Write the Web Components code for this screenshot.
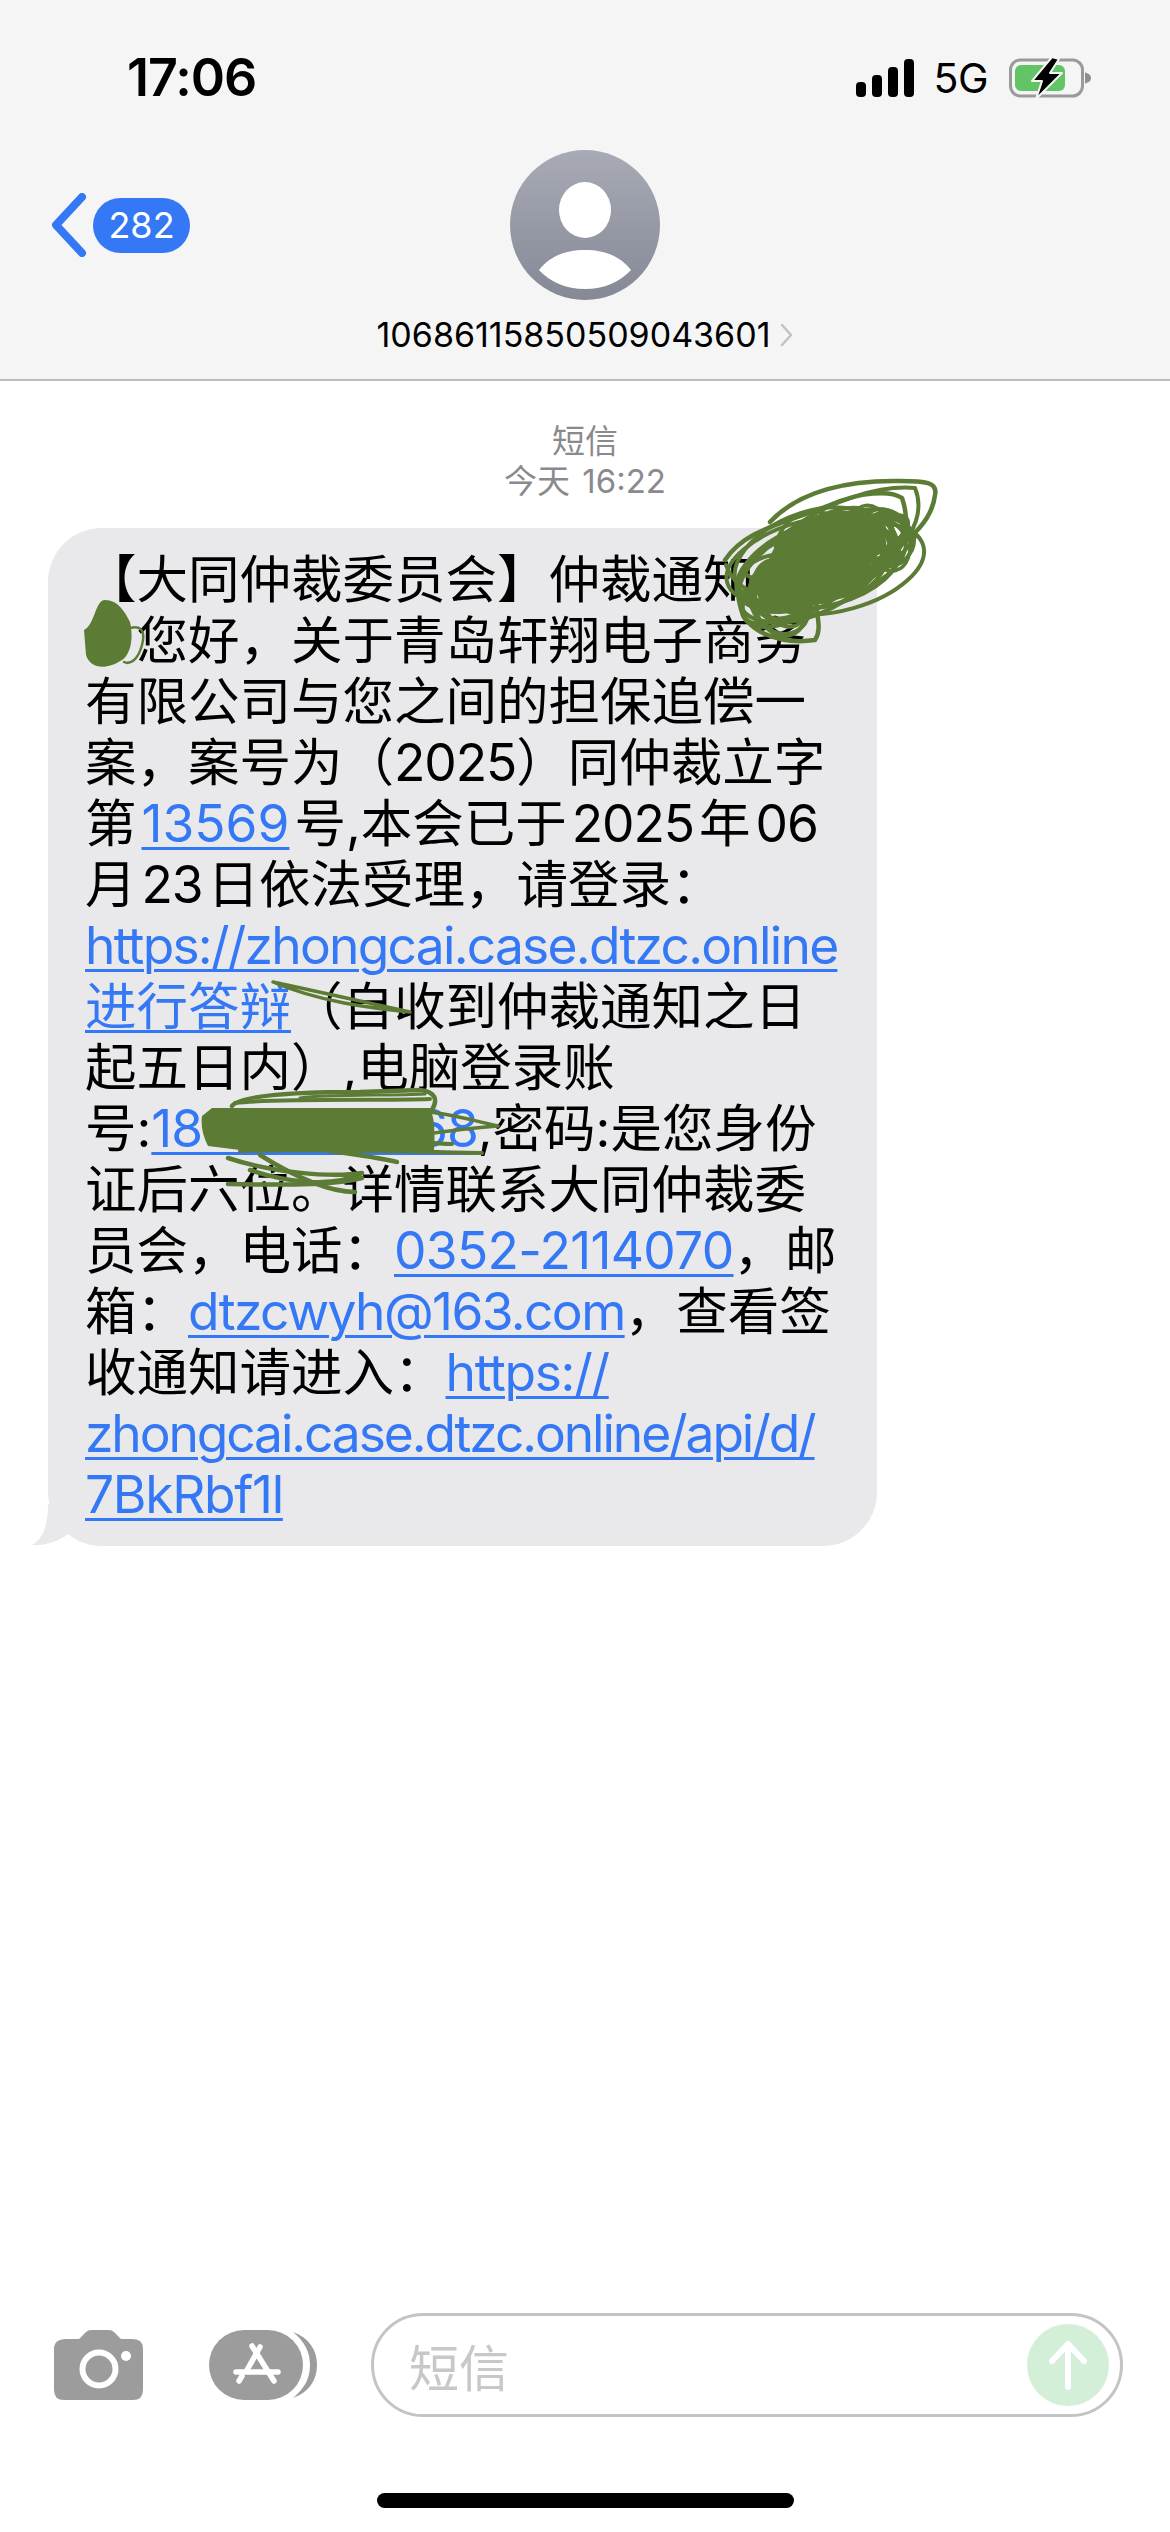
<!DOCTYPE html>
<html lang="zh-CN">
<head>
<meta charset="utf-8">
<title>短信</title>
<style>
  html, body { margin: 0; padding: 0; background: #fff; }
  body {
    width: 1170px;
    height: 2532px;
    position: relative;
    overflow: hidden;
    display: flex;
    flex-direction: column;
    font-family: Inter, "Noto Sans CJK SC", sans-serif;
  }
</style>
</head>
<body>
<chat-header number="10686115850509043601" badge="282"></chat-header>
<msg-thread label="短信" time="今天 16:22">
  <sms-bubble>【大同仲裁委员会】仲裁通知<br><ink-gap></ink-gap>您好，关于青岛轩翔电子商务<br>有限公司与您之间的担保追偿一<br>案，案号为（<sms-num flush>2025</sms-num>）同仲裁立字<br>第<sms-link style="letter-spacing:0">13569</sms-link>号,本会已于<sms-num>2025</sms-num>年<sms-num>06</sms-num><br>月<sms-num>23</sms-num>日依法受理，请登录：<br><sms-link flush style="letter-spacing:-1.75px">https://zhongcai.case.dtzc.online</sms-link><br><sms-link flush cjk>进行答辩</sms-link>（自收到仲裁通知之日<br>起五日内）,电脑登录账<br>号:<sms-link flush>18&nbsp;&nbsp;&nbsp;&nbsp;&nbsp;&nbsp;&nbsp;&nbsp;&nbsp;&nbsp;&nbsp;&nbsp;&nbsp;&nbsp;&nbsp;&nbsp;68</sms-link>,密码:是您身份<br>证后六位。详情联系大同仲裁委<br>员会，电话：<sms-link flush style="letter-spacing:-0.7px">0352-2114070</sms-link>，邮<br>箱：<sms-link flush style="letter-spacing:-1.6px">dtzcwyh@163.com</sms-link>，查看签<br>收通知请进入：<sms-link flush style="letter-spacing:-1.3px">https://</sms-link><br><sms-link flush style="letter-spacing:-2.1px">zhongcai.case.dtzc.online/api/d/</sms-link><br><sms-link flush style="letter-spacing:-1.3px">7BkRbf1l</sms-link></sms-bubble>
</msg-thread>
<compose-bar placeholder="短信"></compose-bar>
<home-bar></home-bar>
<ink-layer></ink-layer>

<script>
// header: status row + avatar + number
class ChatHeader extends HTMLElement {
  constructor() {
    super();
    this.attachShadow({ mode: 'open' });
  }

  connectedCallback() {
    const number = this.getAttribute('number');
    const badge = this.getAttribute('badge');
    this.shadowRoot.innerHTML = `
      <style>
        :host {
          display: block;
          flex: none;
          box-sizing: border-box;
          height: 381px;
          background: #f5f5f5;
          border-bottom: 2px solid #bdbdbd;
          font-family: Inter, "Noto Sans CJK SC", sans-serif;
          color: #000;
        }
        .status {
          display: flex;
          align-items: center;
          justify-content: space-between;
          height: 40px;
          padding: 58px 79px 0 127px;
        }
        .clock { font-size: 52px; font-weight: 600; letter-spacing: -1px; line-height: 40px; }
        .icons { display: flex; align-items: center; }
        .net { font-size: 41px; line-height: 40px; margin: 0 21px 0 19px; letter-spacing: -.5px; }
        svg { display: block; }
        .nav { display: grid; grid-template-columns: 1fr auto 1fr; margin-top: 52px; }
        .back { display: flex; align-items: center; gap: 6px; padding-left: 51px; height: 150px; }
        .badge {
          display: flex;
          align-items: center;
          justify-content: center;
          width: 97px;
          height: 55px;
          border-radius: 28px;
          background: #3478f6;
          color: #fff;
          font-size: 36px;
        }
        .number {
          display: flex;
          justify-content: center;
          align-items: center;
          gap: 10px;
          margin-top: 15px;
          font-size: 34px;
          line-height: 40px;
        }
      </style>
      <div class="status">
        <span class="clock">17:06</span>
        <span class="icons">
          <svg width="58" height="38" viewBox="0 0 58 38" fill="#000">
            <rect x="0" y="23" width="10" height="15" rx="4"/>
            <rect x="16" y="16" width="10" height="22" rx="4"/>
            <rect x="32" y="8" width="10" height="30" rx="4"/>
            <rect x="48" y="0" width="10" height="38" rx="4"/>
          </svg>
          <span class="net">5G</span>
          <svg width="82" height="42" viewBox="0 0 82 42">
            <rect x="1.5" y="3" width="72" height="36" rx="10" fill="none" stroke="#9a9a9a" stroke-width="3"/>
            <path d="M76 15.5c3 .5 6 2.5 6 5.5s-3 5-6 5.5z" fill="#8f8f8f"/>
            <rect x="6" y="8" width="50" height="26" rx="6" fill="#63c466"/>
            <path d="M43 0 L23 24 H33 L27 42 L53 16 H41 L50 2 Z" fill="#000" stroke="#f5f5f5" stroke-width="2" stroke-linejoin="round"/>
          </svg>
        </span>
      </div>
      <div class="nav">
        <div class="back">
          <svg width="36" height="64" viewBox="0 0 36 64" fill="none">
            <path d="M31 4 L5 32 L31 60" stroke="#3478f6" stroke-width="8" stroke-linecap="round" stroke-linejoin="round"/>
          </svg>
          <span class="badge">${badge}</span>
        </div>
        <svg width="150" height="150" viewBox="0 0 150 150">
          <defs>
            <linearGradient id="av" x1="0" y1="0" x2="0" y2="1">
              <stop offset="0" stop-color="#a8abb6"/>
              <stop offset="1" stop-color="#858995"/>
            </linearGradient>
          </defs>
          <circle cx="75" cy="75" r="75" fill="url(#av)"/>
          <ellipse cx="75" cy="60" rx="26" ry="28" fill="#fff"/>
          <path d="M29 120 C40 106 56 100 75 100 C94 100 110 106 121 120 C110 132 94 139 75 139 C56 139 40 132 29 120 Z" fill="#fff"/>
        </svg>
        <span></span>
      </div>
      <div class="number">
        <span>${number}</span>
        <svg width="13" height="24" viewBox="0 0 13 24" fill="none">
          <path d="M2 2 L11 12 L2 22" stroke="#c2c2c2" stroke-width="2.5" stroke-linecap="round" stroke-linejoin="round"/>
        </svg>
      </div>
    `;
  }
}

// scrolling part of the conversation
class MsgThread extends HTMLElement {
  constructor() {
    super();
    this.attachShadow({ mode: 'open' });
  }

  connectedCallback() {
    this.shadowRoot.innerHTML = `
      <style>
        :host {
          display: block;
          flex: 1;
          padding-top: 40px;
          font-family: Inter, "Noto Sans CJK SC", sans-serif;
        }
        .stamp {
          text-align: center;
          color: #8a8a8e;
          font-size: 33px;
          line-height: 40px;
          word-spacing: 3px;
          margin-bottom: 27px;
        }
      </style>
      <div class="stamp">${this.getAttribute('label')}<br>${this.getAttribute('time')}</div>
      <slot></slot>
    `;
  }
}

class SmsBubble extends HTMLElement {
  constructor() {
    super();
    this.attachShadow({ mode: 'open' });
  }

  connectedCallback() {
    this.shadowRoot.innerHTML = `
      <style>
        :host {
          display: block;
          position: relative;
          box-sizing: border-box;
          width: 829px;
          margin-left: 48px;
          padding: 21px 37px;
          background: #e9e9eb;
          border-radius: 54px;
          color: #000;
          font-family: Inter, "Noto Sans CJK SC", sans-serif;
          font-size: 51.5px;
          line-height: 61px;
          white-space: nowrap;
        }
        svg { position: absolute; left: -16px; bottom: 0; }
      </style>
      <svg width="40" height="42" viewBox="0 0 40 42">
        <path d="M16 0 C16 20 12 34 0 41 C12 42 26 38 36 30 L40 0 Z" fill="#e9e9eb"/>
      </svg><slot></slot>`;
  }
}

// latin runs are set tighter than the CJK around them
// no whitespace around the slot: these hosts are inline
class SmsNum extends HTMLElement {
  constructor() {
    super();
    this.attachShadow({ mode: 'open' });
  }

  connectedCallback() {
    this.shadowRoot.innerHTML = `<style>
        :host { letter-spacing: -1.1px; margin: 0 5px; }
        :host([flush]) { margin: 0; }
      </style><slot></slot>`;
  }
}

class SmsLink extends HTMLElement {
  constructor() {
    super();
    this.attachShadow({ mode: 'open' });
  }

  connectedCallback() {
    this.shadowRoot.innerHTML = `<style>
        :host {
          color: #3478f6;
          letter-spacing: -1.1px;
          margin: 0 5px;
          text-decoration: underline;
          text-decoration-thickness: 3px;
          text-underline-offset: 5px;
        }
        :host([flush]) { margin: 0; }
        :host([cjk]) { letter-spacing: 0; }
      </style><slot></slot>`;
  }
}

// blank room for the name hidden under the scribble
class InkGap extends HTMLElement {
  constructor() {
    super();
    this.attachShadow({ mode: 'open' });
  }

  connectedCallback() {
    this.shadowRoot.innerHTML = `<style>:host { display: inline-block; width: 1em; }</style>`;
  }
}

class ComposeBar extends HTMLElement {
  constructor() {
    super();
    this.attachShadow({ mode: 'open' });
  }

  connectedCallback() {
    this.shadowRoot.innerHTML = `
      <style>
        :host {
          display: flex;
          flex: none;
          align-items: center;
          padding: 0 47px 0 54px;
          font-family: Inter, "Noto Sans CJK SC", sans-serif;
        }
        svg { display: block; flex: none; }
        .cam { margin-right: 66px; }
        .store { margin-right: 54px; }
        .field {
          flex: 1;
          box-sizing: border-box;
          height: 104px;
          display: flex;
          align-items: center;
          justify-content: space-between;
          padding: 0 11px 0 35px;
          border: 3px solid #c4c4c4;
          border-radius: 52px;
          color: #c8c8c8;
          font-size: 50px;
        }
        .send {
          width: 82px;
          height: 82px;
          border-radius: 50%;
          background: #d3efd7;
          display: flex;
          align-items: center;
          justify-content: center;
        }
      </style>
      <svg class="cam" width="89" height="70" viewBox="0 0 89 70">
        <path d="M12 9 H25 L32 2 Q34 0 37 0 H55 Q58 0 60 2 L67 9 H79 Q89 9 89 19 V60 Q89 70 79 70 H10 Q0 70 0 60 V19 Q0 9 12 9 Z" fill="#9c9c9c"/>
        <circle cx="45" cy="39" r="16.5" fill="none" stroke="#fff" stroke-width="6"/>
        <circle cx="72" cy="26" r="5" fill="#fff"/>
      </svg>
      <svg class="store" width="108" height="70" viewBox="0 0 108 70">
        <path d="M84 2 C100 8 108 20 108 35 C108 50 100 62 84 68 C96 58 101 48 101 35 C101 22 96 12 84 2 Z" fill="#9c9c9c"/>
        <rect x="0" y="0" width="94" height="70" rx="35" fill="#9c9c9c"/>
        <g stroke="#fff" stroke-width="5.5" stroke-linecap="round" fill="none">
          <path d="M51 17 L38 40"/>
          <path d="M33 46 L30 51"/>
          <path d="M43 16 L65 51"/>
          <path d="M27 42 H69"/>
        </g>
      </svg>
      <div class="field">
        <span>${this.getAttribute('placeholder')}</span>
        <span class="send">
          <svg width="44" height="50" viewBox="0 0 44 50" fill="none">
            <path d="M22 47 V4 M6 21 L22 4 L38 21" stroke="#fff" stroke-width="6" stroke-linecap="round" stroke-linejoin="round"/>
          </svg>
        </span>
      </div>
    `;
  }
}

class HomeBar extends HTMLElement {
  constructor() {
    super();
    this.attachShadow({ mode: 'open' });
  }

  connectedCallback() {
    this.shadowRoot.innerHTML = `
      <style>
        :host { display: flex; flex: none; justify-content: center; padding: 76px 0 24px; }
        div { width: 417px; height: 15px; border-radius: 8px; background: #000; }
      </style>
      <div></div>
    `;
  }
}

// green pen marks someone drew over the screenshot
class InkLayer extends HTMLElement {
  constructor() {
    super();
    this.attachShadow({ mode: 'open' });
  }

  // small seeded generator so every run draws the same marks
  rng(seed) {
    let s = seed;
    return () => {
      s = (s * 16807) % 2147483647;
      return (s - 1) / 2147483646;
    };
  }

  loops(seed, cx, cy, rx, ry, tilt, count, width) {
    const rand = this.rng(seed);
    let out = '';
    for (let i = 0; i < count; i++) {
      const a = rx * (0.45 + rand() * 0.55);
      const b = ry * (0.45 + rand() * 0.55);
      const x = cx + (rand() - 0.5) * rx * 0.5;
      const y = cy + (rand() - 0.5) * ry * 0.5;
      const r = tilt + (rand() - 0.5) * 20;
      out += `<ellipse cx="${x.toFixed(1)}" cy="${y.toFixed(1)}" rx="${a.toFixed(1)}" ry="${b.toFixed(1)}" transform="rotate(${r.toFixed(1)} ${x.toFixed(1)} ${y.toFixed(1)})" stroke-width="${width}"/>`;
    }
    return out;
  }

  connectedCallback() {
    this.shadowRoot.innerHTML = `
      <style>
        :host { position: absolute; left: 0; top: 0; width: 1170px; height: 2532px; pointer-events: none; }
        svg { display: block; }
      </style>
      <svg width="1170" height="2532" viewBox="0 0 1170 2532" fill="none" stroke="#5c7c36" stroke-linecap="round" stroke-linejoin="round">
        <!-- top right, over the name -->
        <path d="M762 580 L795 545 L840 522 L880 520 L885 545 L860 575 L830 595 L790 608 L765 605 Z" fill="#5c7c36" stroke="none"/>
        ${this.loops(7, 825, 560, 88, 44, -24, 24, 4)}
        ${this.loops(19, 880, 535, 40, 32, -20, 7, 3.5)}
        ${this.loops(31, 785, 592, 42, 40, -20, 9, 4)}
        <path d="M770 522 C800 490 850 480 900 481 C925 481 938 482 935 495 C932 520 915 535 880 562" stroke-width="4.5"/>
        <path d="M725 560 C745 530 780 525 830 505 C860 492 890 490 902 498 C908 515 906 530 905 542" stroke-width="4.5"/>
        <path d="M790 530 C830 500 880 485 915 488 C922 505 918 525 905 540" stroke-width="4"/>
        <path d="M745 590 C738 620 745 627 772 622 C810 625 860 600 885 560" stroke-width="4.5"/>
        <path d="M740 605 C745 632 780 645 815 640 C825 625 810 605 820 590" stroke-width="4.5"/>
        <path d="M726 565 C735 590 760 600 800 595 C850 590 905 560 916 535" stroke-width="4"/>
        <!-- left, over the surname -->
        <path d="M84 630 C95 625 95 600 105 600 C118 600 125 612 130 622 C134 640 130 655 122 660 C105 671 90 668 86 655 Z" fill="#5c7c36" stroke="none"/>
        <path d="M130 628 C140 625 146 630 142 645 C138 660 130 665 124 662" stroke-width="2.5"/>
        <!-- account number -->
        <path d="M212 1108 H430 Q436 1120 434 1150 H240 L208 1146 Q200 1130 202 1116 Z" fill="#5c7c36" stroke="none"/>
        <path d="M232 1106 C240 1095 300 1092 360 1092 L420 1090 C436 1092 438 1100 432 1110" stroke-width="4.5"/>
        <path d="M235 1103 C280 1098 380 1101 430 1099" stroke-width="4"/>
        <path d="M300 1098 C330 1094 390 1096 425 1094" stroke-width="3"/>
        <path d="M430 1112 C455 1115 480 1122 498 1126 C470 1128 440 1132 420 1135" stroke-width="3.5"/>
        <path d="M425 1142 C440 1144 450 1144 452 1144" stroke-width="4"/>
        <path d="M240 1151 C300 1149 400 1151 482 1153" stroke-width="4"/>
        <path d="M228 1158 C270 1172 330 1178 362 1173 C330 1190 280 1180 250 1170" stroke-width="4.5"/>
        <path d="M228 1184 C280 1185 330 1186 362 1178" stroke-width="4.5"/>
        <path d="M260 1155 C300 1180 330 1192 355 1192" stroke-width="4.5"/>
        <path d="M330 1151 C360 1155 380 1158 397 1162" stroke-width="4.5"/>
        <!-- short stroke over the link -->
        <path d="M273 982 C320 1002 370 1008 410 1012 C370 1003 320 992 273 982 Z" stroke-width="3.5"/>
      </svg>
    `;
  }
}

customElements.define('chat-header', ChatHeader);
customElements.define('msg-thread', MsgThread);
customElements.define('sms-bubble', SmsBubble);
customElements.define('sms-num', SmsNum);
customElements.define('sms-link', SmsLink);
customElements.define('ink-gap', InkGap);
customElements.define('compose-bar', ComposeBar);
customElements.define('home-bar', HomeBar);
customElements.define('ink-layer', InkLayer);
</script>
</body>
</html>
